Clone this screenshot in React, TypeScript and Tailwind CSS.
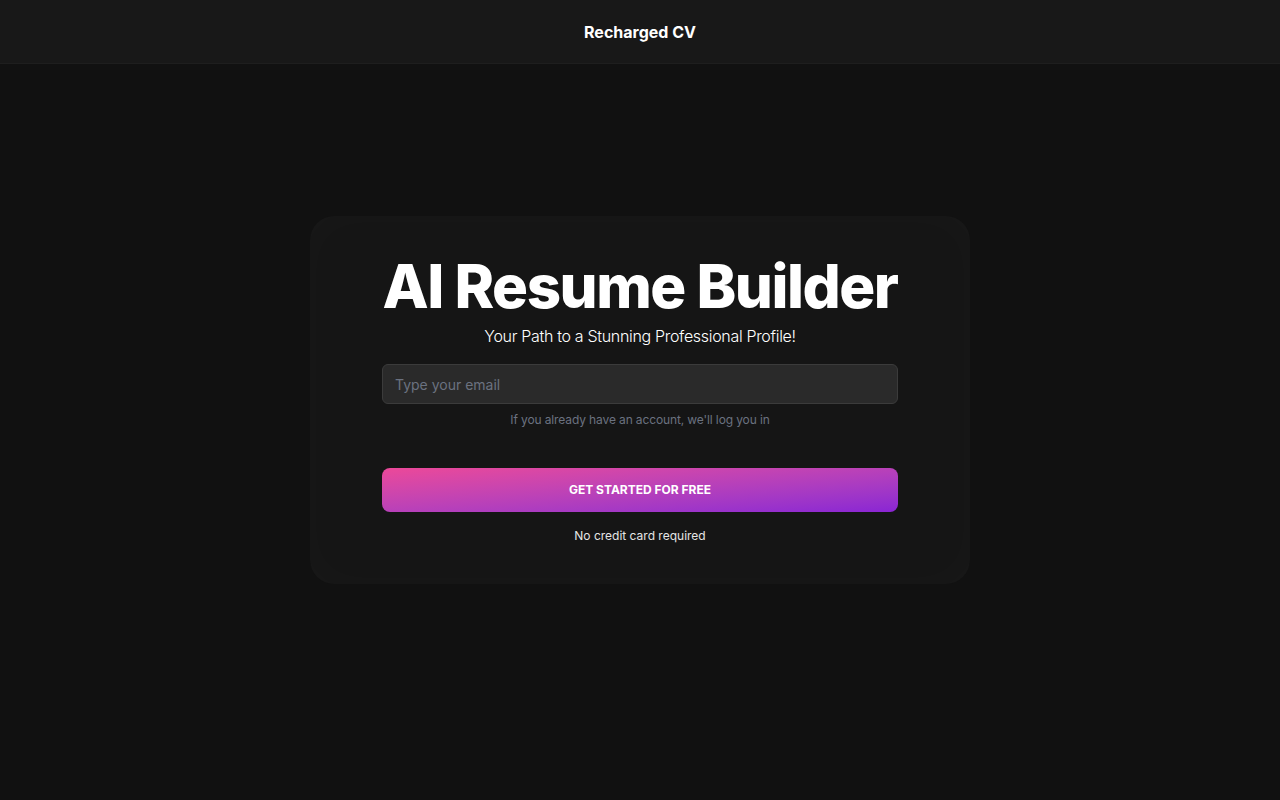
import React from "react";

export default function App() {
  return (
    <div
      className="min-h-screen w-full bg-[#111111] text-white"
      style={{ fontFamily: "Inter, 'Noto Sans', sans-serif" }}
    >
      <header className="h-16 w-full bg-[#181818] border-b border-[#1e1e1e] flex items-center justify-center">
        <span className="text-base font-bold text-white">Recharged CV</span>
      </header>
      <main className="flex justify-center pt-[152px]">
        <div className="w-[660px] rounded-3xl bg-[#151515] px-[72px] pt-10 pb-10 flex flex-col items-center shadow-[inset_0_0_48px_rgba(255,255,255,0.02)]">
          <h1 className="text-6xl leading-none font-extrabold tracking-tight text-white text-center">
            AI Resume Builder
          </h1>
          <p className="mt-2 text-base leading-6 font-light text-white text-center tracking-[-0.02em]">
            Your Path to a Stunning Professional Profile!
          </p>
          <input
            type="email"
            placeholder="Type your email"
            className="mt-4 w-full h-10 rounded-md border border-[#3b3b3b] bg-[#2a2a2a] px-3 text-sm text-white placeholder:text-[#6b7280] outline-none"
          />
          <p className="mt-2 text-xs leading-4 text-[#6b7280] text-center tracking-[-0.01em]">
            If you already have an account, we'll log you in
          </p>
          <button className="mt-10 w-full h-11 rounded-lg bg-gradient-to-br from-[#ec4899] to-[#8a24d4] text-xs font-bold text-white tracking-normal">
            GET STARTED FOR FREE
          </button>
          <p className="mt-4 text-xs leading-4 text-[#e5e5e5] text-center">No credit card required</p>
        </div>
      </main>
    </div>
  );
}
